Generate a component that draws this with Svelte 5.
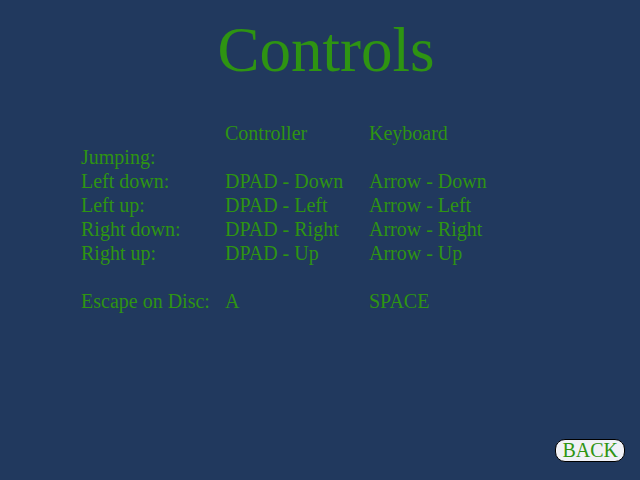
<script>
  const rows = [
    ['Jumping:', '', ''],
    ['Left down:', 'DPAD - Down', 'Arrow - Down'],
    ['Left up:', 'DPAD - Left', 'Arrow - Left'],
    ['Right down:', 'DPAD - Right', 'Arrow - Right'],
    ['Right up:', 'DPAD - Up', 'Arrow - Up'],
    ['', '', ''],
    ['Escape on Disc:', 'A', 'SPACE'],
  ];
</script>

<main>
  <h1>Controls</h1>
  <table>
    <thead>
      <tr><td></td><th scope="col">Controller</th><th scope="col">Keyboard</th></tr>
    </thead>
    <tbody>
      {#each rows as [action, pad, key]}
        <tr><td>{action}</td><td>{pad}</td><td>{key}</td></tr>
      {/each}
    </tbody>
  </table>
  <footer><button type="button">BACK</button></footer>
</main>

<style>
  :global(body) {
    margin: 0;
    background: #21395e;
  }
  main {
    box-sizing: border-box;
    min-height: 100vh;
    padding: 14px 15px 18px;
    display: flex;
    flex-direction: column;
    color: #2e9412;
    font-family: "Liberation Serif", "Times New Roman", serif;
    font-size: 20px;
    line-height: 24px;
  }
  h1 {
    margin: 0 0 35px;
    padding-left: 12px;
    font-size: 63px;
    line-height: 72px;
    font-weight: normal;
    text-align: center;
  }
  table {
    width: 432px;
    margin-left: 66px;
    border-collapse: collapse;
    table-layout: fixed;
  }
  th,
  td {
    height: 24px;
    padding: 0;
    font-weight: normal;
    text-align: left;
    white-space: nowrap;
  }
  footer {
    margin-top: auto;
    display: flex;
    justify-content: flex-end;
  }
  button {
    box-sizing: border-box;
    height: 23px;
    padding: 0 6px;
    border: 1px solid #000;
    border-radius: 10px;
    background: #f0f1f6;
    color: inherit;
    font: inherit;
    line-height: 21px;
  }
</style>
